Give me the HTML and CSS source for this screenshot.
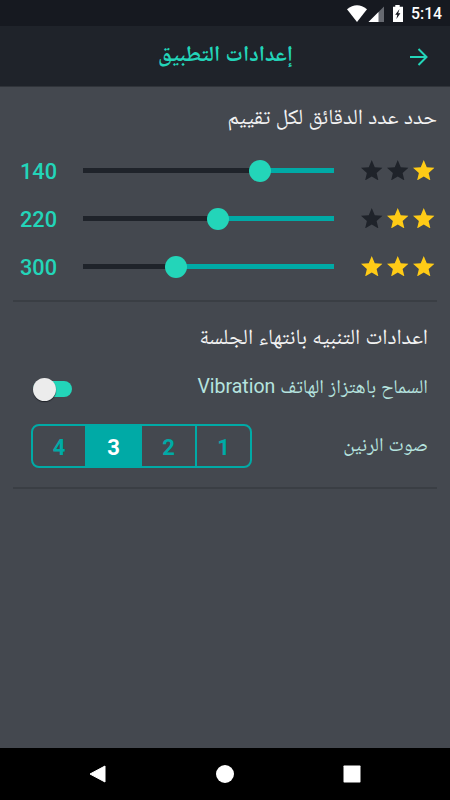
FILE: index.html
```html
<!DOCTYPE html>
<html lang="ar">
<head>
<meta charset="utf-8">
<title>إعدادات التطبيق</title>
<link rel="stylesheet" href="styles.css">
</head>
<body>
<svg class="defs" width="0" height="0"><symbol id="star" viewBox="2 2 20 19"><path d="M12 17.27 18.18 21l-1.64-7.03L22 9.24l-7.19-.61L12 2 9.19 8.63 2 9.24l5.46 4.73L5.82 21z"/></symbol></svg>
<div class="status">
  <svg class="status-icons" viewBox="0 0 60 18"><path fill="#fff" d="M0 4.200Q10 -3.600 20 4.200L10 17z"/><path fill="#666970" d="M37 1.500V17H21.500z"/><path fill="#fff" d="M31.500 7V17H21.500z"/><path fill="#fff" fill-rule="evenodd" d="M48.300 0h4.400v1.700H56V17h-10V1.700h2.300zM52.500 4l-4.300 5.700h2.100L49.400 14l4-5.700h-2.200z"/></svg>
  <span>5:14</span>
</div>
<header class="header">
  <h1 class="title" dir="rtl">إعدادات التطبيق</h1>
  <svg class="arrow" viewBox="0 0 18 18"><path d="M0 9h16M8.500 1l8 8-8 8"/></svg>
</header>
<main class="main">
  <section class="ratings">
    <h2 class="heading heading-first" dir="rtl">حدد عدد الدقائق لكل تقييم</h2>
    <div class="row">
      <span class="minutes">140</span>
      <div class="track"><div class="rest" style="width:177px"></div><div class="knob"></div></div>
      <div class="stars"><svg class="off"><use href="#star"/></svg><svg class="off"><use href="#star"/></svg><svg><use href="#star"/></svg></div>
    </div>
    <div class="row">
      <span class="minutes">220</span>
      <div class="track"><div class="rest" style="width:135px"></div><div class="knob"></div></div>
      <div class="stars"><svg class="off"><use href="#star"/></svg><svg><use href="#star"/></svg><svg><use href="#star"/></svg></div>
    </div>
    <div class="row">
      <span class="minutes">300</span>
      <div class="track"><div class="rest" style="width:93px"></div><div class="knob"></div></div>
      <div class="stars"><svg><use href="#star"/></svg><svg><use href="#star"/></svg><svg><use href="#star"/></svg></div>
    </div>
  </section>
  <section class="alerts">
    <h2 class="heading" dir="rtl">اعدادات التنبيه بانتهاء الجلسة</h2>
    <div class="option">
      <div class="switch"><div class="switch-knob"></div></div>
      <span class="label" dir="rtl">السماح باهتزاز الهاتف Vibration</span>
    </div>
    <div class="option option-tone">
      <div class="tones"><span>4</span><span class="active">3</span><span>2</span><span>1</span></div>
      <span class="label" dir="rtl">صوت الرنين</span>
    </div>
  </section>
</main>
<nav class="nav">
  <svg viewBox="0 0 18 18"><path d="M16 1v16L1 9z" stroke="#fff" stroke-linejoin="round"/></svg>
  <svg viewBox="0 0 18 18"><circle cx="9" cy="9" r="9"/></svg>
  <svg viewBox="0 0 18 18"><rect x=".5" y=".5" width="17" height="17" rx=".7"/></svg>
</nav>
</body>
</html>
```
FILE: styles.css
```css
* { box-sizing: border-box; }
body { margin: 0; width: 450px; height: 800px; overflow: hidden; display: flex; flex-direction: column; background: #44484f; font-family: Roboto, "Noto Naskh Arabic", "Noto Sans Arabic", "DejaVu Sans", sans-serif; }
h1, h2 { margin: 0; }
svg { display: block; }
.defs { position: absolute; }
.status { height: 26px; flex: none; background: #161920; color: #fff; display: flex; justify-content: flex-end; align-items: center; gap: 4px; padding-right: 9px; font-size: 15.800px; font-weight: 500; }
.status span { width: 30px; white-space: nowrap; line-height: 26px; padding-top: 2px; }
.status-icons { width: 60px; height: 18px; margin-top: 1px; }
.header { height: 61px; flex: none; background: #1f232a; border-bottom: 1px solid #30343a; display: flex; align-items: center; justify-content: flex-end; padding-right: 22px; }
.title { width: 136px; margin-right: 117px; color: #23d5b9; font-size: 21.800px; line-height: 30px; white-space: nowrap; font-weight: 700; padding-bottom: 5px; }
.arrow { width: 18px; height: 18px; fill: none; stroke: #23d5b9; stroke-width: 2; margin-top: 1px; }
.main { flex: 1; padding: 0 13px; }
.ratings { height: 215px; border-bottom: 2px solid #3a3e44; }
.heading { color: #f3f3f3; font-size: 21.700px; font-weight: 400; line-height: 30px; white-space: nowrap; }
.heading-first { height: 60px; padding-top: 15px; }
.row { height: 48px; display: flex; align-items: center; padding-left: 7px; }
.minutes { width: 63px; color: #23d5b9; font-size: 21.700px; font-weight: 500; }
.track { width: 251px; height: 5px; margin-bottom: 1px; background: #00aaa6; display: flex; align-items: center; }
.rest { height: 5px; background: #1f232a; flex: none; }
.knob { width: 22px; height: 22px; border-radius: 50%; background: #23d5b9; margin-left: -11px; flex: none; }
.stars { display: flex; gap: 5px; margin: 0 0 2px 27px; fill: #ffcb16; }
.stars svg { width: 21.500px; height: 20.500px; margin-right: -.5px; }
.stars .off { fill: #1f232a; }
.alerts { height: 187px; border-bottom: 2px solid #3a3e44; padding: 20px 9px 0 18px; }
.option { display: flex; align-items: center; justify-content: space-between; height: 42px; margin-top: 15px; }
.alerts .heading { height: 30px; }
.option-tone { height: 44px; margin-top: 15px; }
.label { color: #b5e3df; font-size: 19.500px; line-height: 30px; white-space: nowrap; padding-bottom: 2px; }
.switch { width: 39px; height: 16px; margin: 2px 0 0 2px; border-radius: 8px; background: #23d5b9; display: flex; align-items: center; }
.switch-knob { width: 23px; height: 23px; border-radius: 50%; background: #ececec; box-shadow: 0 1px 1px #202329; flex: none; }
.tones { display: grid; grid-template-columns: 52px 57px 53px 55px; width: 221px; height: 44px; border: 2px solid #00aaa6; border-radius: 8px; overflow: hidden; color: #00aaa6; font-size: 22px; font-weight: 700; }
.tones span { display: grid; place-items: center; padding-top: 2px; }
.tones span:last-child { border-left: 2px solid #00aaa6; }
.tones .active { background: #00aaa6; color: #fff; }
.nav { height: 52px; flex: none; background: #000; display: flex; align-items: center; gap: 109px; padding-left: 89px; fill: #fff; }
.nav svg { width: 18px; height: 18px; flex: none; }
```
